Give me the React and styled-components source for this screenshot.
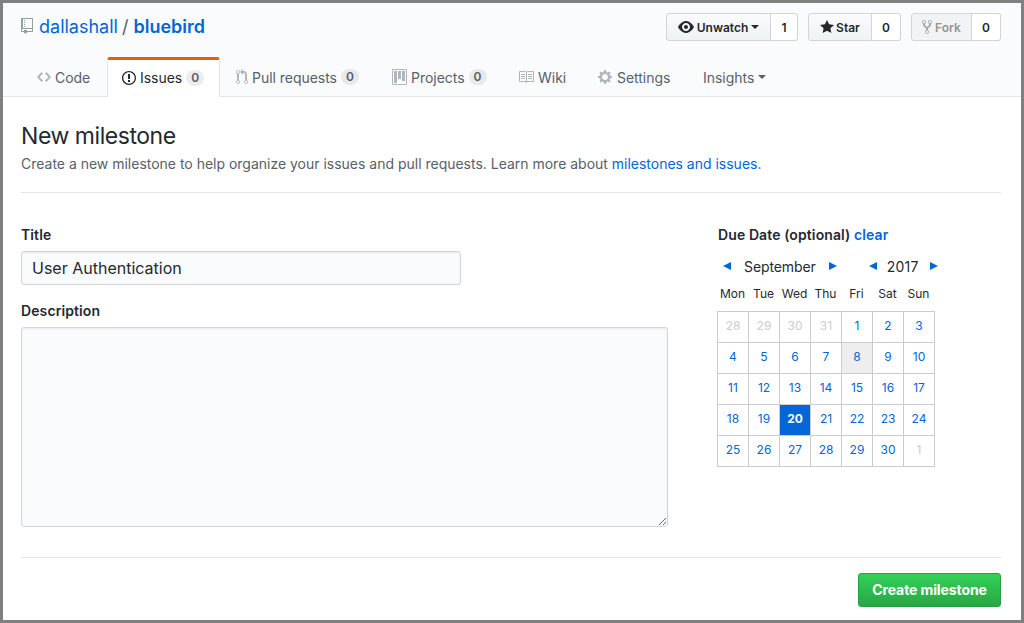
import React from "react";
import styled, { createGlobalStyle } from "styled-components";

const Global = createGlobalStyle`
  html, body { margin: 0; padding: 0; background: #fff; }
  * { box-sizing: border-box; }
  body { font-family: Inter, "Liberation Sans", sans-serif; color: #24292e; }
`;

const Frame = styled.div`
  width: 1024px; height: 623px; border: 3px solid #808080; background: #fff; overflow: hidden;
`;
const Head = styled.header`
  height: 94px; background: #fafbfc; border-bottom: 1px solid #e1e4e8;
  display: flex; flex-direction: column;
`;
const TopRow = styled.div`
  display: flex; justify-content: space-between; align-items: flex-start;
  padding: 10px 20px 0 18px; height: 54px;
`;
const RepoTitle = styled.h1`
  margin: -1px 0 0; display: flex; align-items: center; font-size: 18px; font-weight: 400; height: 28px; letter-spacing: 0;
`;
const Link = styled.a`
  color: #0366d6; text-decoration: none; font-weight: ${p => (p.$bold ? 600 : "inherit")};
`;
const Slash = styled.span` color: #586069; margin: 0 5px 0 4px; `;
const Icon = styled.svg`
  fill: ${p => p.$color || "currentColor"}; flex: none; display: block;
  margin-right: ${p => p.$mr || 0}px;
`;
const Actions = styled.div` display: flex; gap: 10px; `;
const BtnGroup = styled.div` display: flex; height: 28px; `;
const Btn = styled.div`
  width: ${p => p.$w}px; display: flex; align-items: center; justify-content: center;
  font-size: 12px; font-weight: 600; letter-spacing: 0;
  color: ${p => (p.$off ? "#8f969d" : "#24292e")};
  background: ${p => (p.$off ? "#f1f3f5" : "linear-gradient(#fafbfc, #eff3f6)")};
  border: 1px solid #d1d5da; border-radius: 3px 0 0 3px;
`;
const Count = styled.div`
  width: ${p => p.$w}px; display: flex; align-items: center; justify-content: center;
  font-size: 12px; font-weight: 600; background: #fff;
  border: 1px solid #d1d5da; border-left: 0; border-radius: 0 3px 3px 0;
`;
const Caret = styled.span`
  display: inline-block; width: 0; height: 0; margin-left: ${p => p.$ml || 3}px;
  border: 4px solid transparent; border-top-color: ${p => p.$color || "#24292e"}; border-bottom: 0;
`;
const Tabs = styled.nav`
  display: flex; height: 40px; padding-left: 18px; margin-bottom: -1px; align-items: stretch;
`;
const Tab = styled.div`
  display: flex; align-items: center; font-size: 14px; letter-spacing: -0.03px; white-space: nowrap;
  width: ${p => p.$w}px; padding-left: ${p => p.$pl}px;
  color: ${p => (p.$active ? "#24292e" : "#586069")};
  ${p => p.$active && `
    background: #fff; border: 1px solid #e1e4e8; border-top: 3px solid #e36209; border-bottom: 0;
    border-radius: 3px 3px 0 0; padding-bottom: 2px;
  `}
`;
const Pill = styled.span`
  display: inline-block; min-width: 18px; padding: 2px 5px; margin-left: 4px;
  font-size: 12px; font-weight: 600; line-height: 1; color: #586069; background: rgba(27,31,35,.08); border-radius: 20px;
  text-align: center;
`;
const Main = styled.main` padding: 0 20px 0 18px; `;
const PageTitle = styled.h2`
  margin: 24px 0 0; font-size: 23px; font-weight: 400; line-height: 30px; letter-spacing: -0.45px;
`;
const Sub = styled.p`
  margin: 3px 0 0; font-size: 14px; line-height: 20px; color: #586069; letter-spacing: -0.01px;
`;
const Rule = styled.hr`
  margin: ${p => p.$mt}px 0 0; border: 0; border-top: 1px solid #e1e4e8; height: 0;
`;
const Columns = styled.div` display: flex; margin-top: 32px; height: 332px; `;
const FormCol = styled.div` width: 647px; `;
const Side = styled.div` margin-left: 50px; width: 260px; `;
const Label = styled.label`
  display: block; font-size: 14px; font-weight: 600; line-height: 20px; letter-spacing: 0.1px;
  margin-top: ${p => p.$mt || 0}px;
`;
const TitleInput = styled.input`
  display: block; margin-top: 6px; width: 440px; height: 34px; padding: 0 10px;
  font: 400 16px Inter, "Liberation Sans", sans-serif; letter-spacing: 0; color: #24292e;
  background: #fafbfc; border: 1px solid #d1d5da; border-radius: 3px; outline: none;
  box-shadow: inset 0 1px 2px rgba(27,31,35,.075);
`;
const Desc = styled.textarea`
  display: block; margin-top: 6px; width: 647px; height: 200px; padding: 8px;
  background: #fafbfc; border: 1px solid #d1d5da; border-radius: 3px; outline: none;
  box-shadow: inset 0 1px 2px rgba(27,31,35,.075);
`;
const MonthRow = styled.div`
  display: flex; align-items: center; margin-top: 11px; height: 20px; font-size: 14px; letter-spacing: -0.1px;
`;
const Year = styled.span` margin-left: 10px; letter-spacing: 0.25px; `;
const Arrow = styled.span`
  width: 0; height: 0; flex: none; border-style: solid; border-width: 4.5px 0 4.5px 8px;
  border-color: transparent transparent transparent #0366d6;
  transform: ${p => (p.$left ? "scaleX(-1)" : "none")};
  margin: ${p => p.$m};
`;
const Weekdays = styled.div`
  display: grid; grid-template-columns: repeat(7, 31px); margin-top: 9px; margin-left: -1px; height: 18px;
  font-size: 12px; line-height: 18px; text-align: center;
`;
const CalGrid = styled.div`
  display: grid; grid-template-columns: repeat(7, 31px); grid-auto-rows: 31px; margin-top: 8px; margin-left: -1px;
  width: 218px; border-top: 1px solid #ccc; border-left: 1px solid #ccc;
`;
const Day = styled.div`
  display: flex; align-items: center; justify-content: center; font-size: 12px; padding-bottom: 3px;
  border-right: 1px solid #ccc; border-bottom: 1px solid #ccc;
  color: ${p => (p.$selected ? "#fff" : p.$muted ? "#ccc" : "#0366d6")};
  background: ${p => (p.$selected ? "#0366d6" : p.$today ? "#eee" : "transparent")};
  font-weight: ${p => (p.$selected ? 700 : 400)};
`;
const Footer = styled.div` display: flex; justify-content: flex-end; margin-top: 15px; `;
const Primary = styled.button`
  width: 143px; height: 34px; padding: 0 0 2px; font: 700 14px Inter, "Liberation Sans", sans-serif; letter-spacing: -0.1px; color: #fff;
  background: linear-gradient(#34d058, #28a745); border: 1px solid #279f43; border-radius: 3px;
`;

const P = {
  repo: "M4 9H3V8h1v1zm0-3H3v1h1V6zm0-2H3v1h1V4zm0-2H3v1h1V2zm8-1v12c0 .55-.45 1-1 1H6v2l-1.5-1.5L3 16v-2H1c-.55 0-1-.45-1-1V1c0-.55.45-1 1-1h10c.55 0 1 .45 1 1zm-1 10H1v2h2v-1h3v1h5v-2zm0-10H2v9h9V1z",
  code: "M9.5 3L8 4.5 11.5 8 8 11.5 9.5 13 14 8 9.5 3zm-5 0L0 8l4.5 5L6 11.5 2.5 8 6 4.5 4.5 3z",
  issue: "M7 2.3c3.14 0 5.7 2.56 5.7 5.7s-2.56 5.7-5.7 5.7A5.71 5.71 0 0 1 1.3 8c0-3.14 2.56-5.7 5.7-5.7zM7 1C3.14 1 0 4.14 0 8s3.14 7 7 7 7-3.14 7-7-3.14-7-7-7zm1 3H6v5h2V4zm0 6H6v2h2v-2z",
  pr: "M11 11.28V5c-.03-.78-.34-1.47-.94-2.06C9.46 2.35 8.78 2.03 8 2H7V0L4 3l3 3V4h1c.27.02.48.11.69.31.21.2.3.42.31.69v6.28A1.993 1.993 0 0 0 10 15a1.993 1.993 0 0 0 1-3.72zm-1 2.92c-.66 0-1.2-.55-1.2-1.2 0-.65.55-1.2 1.2-1.2.65 0 1.2.55 1.2 1.2 0 .65-.55 1.2-1.2 1.2zM4 3c0-1.11-.89-2-2-2a1.993 1.993 0 0 0-1 3.72v6.56A1.993 1.993 0 0 0 2 15a1.993 1.993 0 0 0 1-3.72V4.72c.59-.34 1-.98 1-1.72zm-.8 10c0 .66-.55 1.2-1.2 1.2-.65 0-1.2-.55-1.2-1.2 0-.65.55-1.2 1.2-1.2.65 0 1.2.55 1.2 1.2zM2 4.2C1.34 4.2.8 3.65.8 3c0-.65.55-1.2 1.2-1.2.65 0 1.2.55 1.2 1.2 0 .65-.55 1.2-1.2 1.2z",
  project: "M10 12h3V2h-3v10zm-4-2h3V2H6v8zm-4 4h3V2H2v12zm-1 1h13V1H1v14zM14 0H1a1 1 0 0 0-1 1v14a1 1 0 0 0 1 1h13a1 1 0 0 0 1-1V1a1 1 0 0 0-1-1z",
  book: "M3 5h4v1H3V5zm0 3h4V7H3v1zm0 2h4V9H3v1zm11-5h-4v1h4V5zm0 2h-4v1h4V7zm0 2h-4v1h4V9zm2-6v9c0 .55-.45 1-1 1H9.5l-1 1-1-1H2c-.55 0-1-.45-1-1V3c0-.55.45-1 1-1h5.5l1 1 1-1H15c.55 0 1 .45 1 1zm-8 .5L7.5 3H2v9h6V3.5zm7-.5H9.5l-.5.5V12h6V3z",
  gear: "M14 8.77v-1.6l-1.94-.64-.45-1.09.88-1.84-1.13-1.13-1.81.91-1.09-.45-.69-1.92h-1.6l-.63 1.94-1.11.45-1.84-.88-1.13 1.13.91 1.81-.45 1.09L0 7.23v1.59l1.94.64.45 1.09-.88 1.84 1.13 1.13 1.81-.91 1.09.45.69 1.92h1.59l.63-1.94 1.11-.45 1.84.88 1.13-1.13-.92-1.81.47-1.09L14 8.75v.02zM7 11c-1.66 0-3-1.34-3-3s1.34-3 3-3 3 1.34 3 3-1.34 3-3 3z",
  eye: "M8.06 2C3 2 0 8 0 8s3 6 8.06 6C13 14 16 8 16 8s-3-6-7.94-6zM8 12c-2.2 0-4-1.78-4-4 0-2.2 1.8-4 4-4 2.22 0 4 1.8 4 4 0 2.22-1.78 4-4 4zm2-4c0 1.11-.89 2-2 2-1.11 0-2-.89-2-2 0-1.11.89-2 2-2 1.11 0 2 .89 2 2z",
  star: "M14 6l-4.9-.64L7 1 4.9 5.36 0 6l3.6 3.26L2.67 14 7 11.67 11.33 14l-.93-4.74L14 6z",
  fork: "M8 1a1.993 1.993 0 0 0-1 3.72V6L5 8 3 6V4.72A1.993 1.993 0 0 0 2 1a1.993 1.993 0 0 0-1 3.72V6.5l3 3v1.78A1.993 1.993 0 0 0 5 15a1.993 1.993 0 0 0 1-3.72V9.5l3-3V4.72A1.993 1.993 0 0 0 8 1zM2 4.2C1.34 4.2.8 3.65.8 3c0-.65.55-1.2 1.2-1.2.65 0 1.2.55 1.2 1.2 0 .65-.55 1.2-1.2 1.2zm3 10c-.66 0-1.2-.55-1.2-1.2 0-.65.55-1.2 1.2-1.2.65 0 1.2.55 1.2 1.2 0 .65-.55 1.2-1.2 1.2zm3-10c-.66 0-1.2-.55-1.2-1.2 0-.65.55-1.2 1.2-1.2.65 0 1.2.55 1.2 1.2 0 .65-.55 1.2-1.2 1.2z",
};

const Oct = ({ d, w, color, mr }) => (
  <Icon viewBox={`0 0 ${w} 16`} width={w} height={16} $color={color} $mr={mr}><path fillRule="evenodd" d={d} /></Icon>
);

const weekdays = ["Mon", "Tue", "Wed", "Thu", "Fri", "Sat", "Sun"];
const days = [
  ["28", 1], ["29", 1], ["30", 1], ["31", 1],
  ...Array.from({ length: 30 }, (_, i) => [String(i + 1), 0]),
  ["1", 1],
];

export default function App() {
  return (
    <>
      <Global />
      <Frame>
        <Head>
          <TopRow>
            <RepoTitle>
              <Oct d={P.repo} w={12} color="#959da5" mr={6} />
              <Link>dallashall</Link><Slash>/</Slash><Link $bold>bluebird</Link>
            </RepoTitle>
            <Actions>
              <BtnGroup>
                <Btn $w={105}><Oct d={P.eye} w={16} mr={3} />Unwatch<Caret /></Btn>
                <Count $w={27}>1</Count>
              </BtnGroup>
              <BtnGroup>
                <Btn $w={64}><Oct d={P.star} w={14} mr={2} />Star</Btn>
                <Count $w={29}>0</Count>
              </BtnGroup>
              <BtnGroup>
                <Btn $w={61} $off><Oct d={P.fork} w={10} color="#a3aab1" mr={3} />Fork</Btn>
                <Count $w={29}>0</Count>
              </BtnGroup>
            </Actions>
          </TopRow>
          <Tabs>
            <Tab $w={86} $pl={16}><Oct d={P.code} w={14} color="#b0b6bd" mr={4} />Code</Tab>
            <Tab $w={113} $pl={14} $active><Oct d={P.issue} w={14} color="#24292e" mr={4} />Issues<Pill>0</Pill></Tab>
            <Tab $w={155} $pl={16}><Oct d={P.pr} w={12} color="#b0b6bd" mr={4} />Pull requests<Pill>0</Pill></Tab>
            <Tab $w={143} $pl={17}><Oct d={P.project} w={15} color="#b0b6bd" mr={4} />Projects<Pill>0</Pill></Tab>
            <Tab $w={80} $pl={0}><Oct d={P.book} w={16} color="#b0b6bd" mr={4} />Wiki</Tab>
            <Tab $w={105} $pl={0}><Oct d={P.gear} w={14} color="#b0b6bd" mr={5} />Settings</Tab>
            <Tab $w={90} $pl={0}>Insights<Caret $ml={4} $color="#586069" /></Tab>
          </Tabs>
        </Head>
        <Main>
          <PageTitle>New milestone</PageTitle>
          <Sub>Create a new milestone to help organize your issues and pull requests. Learn more about <Link>milestones and issues</Link>.</Sub>
          <Rule $mt={18} />
          <Columns>
            <FormCol>
              <Label>Title</Label>
              <TitleInput defaultValue="User Authentication" />
              <Label $mt={16}>Description</Label>
              <Desc />
            </FormCol>
            <Side>
              <Label>Due Date (optional) <Link>clear</Link></Label>
              <MonthRow>
                <Arrow $left $m="0 13px 0 5px" />
                <span>September</span>
                <Arrow $m="0 0 0 13px" />
                <Arrow $left $m="0 0 0 32px" />
                <Year>2017</Year>
                <Arrow $m="0 0 0 11px" />
              </MonthRow>
              <Weekdays>{weekdays.map(d => <span key={d}>{d}</span>)}</Weekdays>
              <CalGrid>
                {days.map(([n, muted], i) => (
                  <Day key={i} $muted={!!muted} $selected={i === 23} $today={i === 11}>{n}</Day>
                ))}
              </CalGrid>
            </Side>
          </Columns>
          <Rule $mt={0} />
          <Footer><Primary>Create milestone</Primary></Footer>
        </Main>
      </Frame>
    </>
  );
}
